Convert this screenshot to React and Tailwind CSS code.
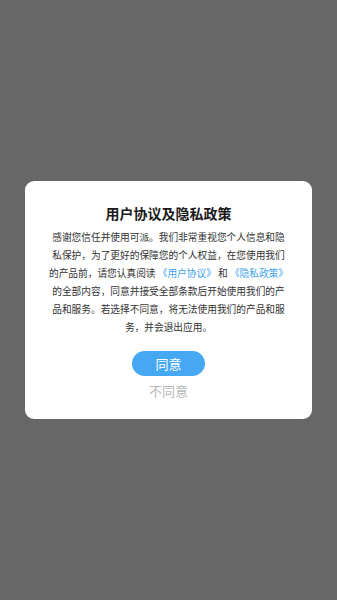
import React from "react";

const Link = ({ children }) => <span className="text-[#3fa3ea]">{children}</span>;

export default function App() {
  return (
    <div
      className="w-full h-[600px] bg-[#676767] flex items-center justify-center"
      style={{ fontFamily: '"Noto Sans CJK SC", "Noto Sans", sans-serif' }}
    >
      <div className="w-[287px] bg-white rounded-[9px] pt-[22px] pb-[19px] flex flex-col items-center">
        <div className="text-[14px] leading-[20px] font-bold text-[#1a1a1a]">用户协议及隐私政策</div>
        <div className="mt-[5px] w-[240px] text-center text-[9.7px] leading-[18px] text-[#333]">
          <div>感谢您信任并使用可派。我们非常重视您个人信息和隐</div>
          <div>私保护，为了更好的保障您的个人权益，在您使用我们</div>
          <div>
            的产品前，请您认真阅读 <Link>《用户协议》</Link> 和 <Link>《隐私政策》</Link>
          </div>
          <div>的全部内容，同意并接受全部条款后开始使用我们的产</div>
          <div>品和服务。若选择不同意，将无法使用我们的产品和服</div>
          <div>务，并会退出应用。</div>
        </div>
        <button className="mt-[15px] w-[73px] h-[25px] rounded-full bg-[#46a8f2] text-white text-[13px] leading-[25px]">
          同意
        </button>
        <div className="mt-[6px] text-[13px] leading-[18px] text-[#b8b8b8]">不同意</div>
      </div>
    </div>
  );
}
